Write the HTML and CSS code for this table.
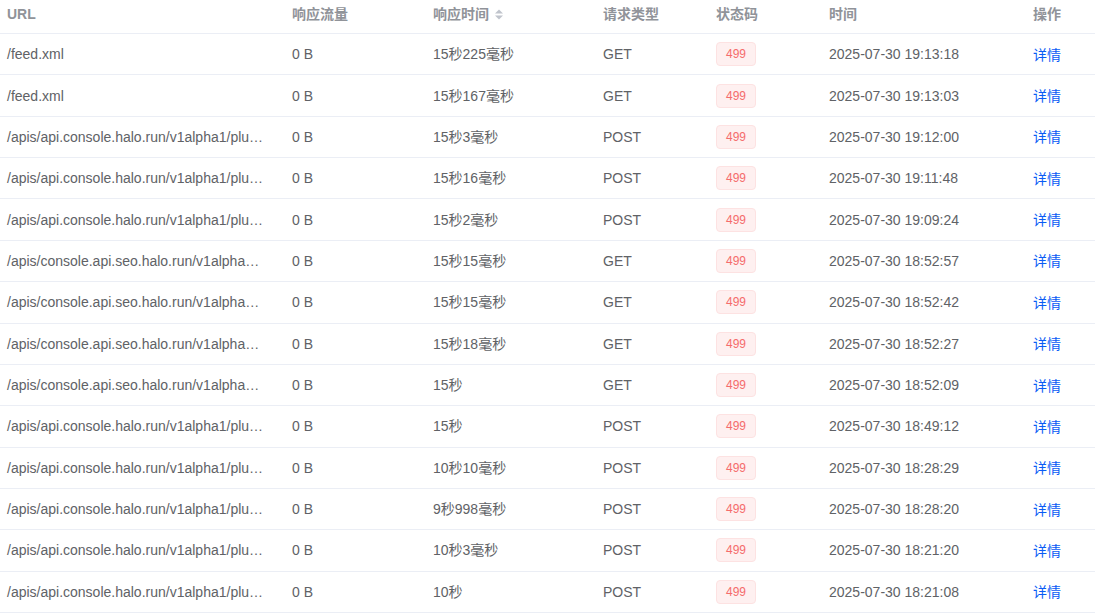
FILE: index.html
```html
<!DOCTYPE html>
<html lang="zh-CN">
<head>
<meta charset="utf-8">
<title>请求日志</title>
<link rel="stylesheet" href="styles.css">
</head>
<body>
<div class="table">
  <div class="row head">
    <div class="cell">URL</div>
    <div class="cell">响应流量</div>
    <div class="cell">响应时间<svg class="sort" viewBox="0 0 8 11" width="8" height="11"><path d="M0 4.5 L4 0.5 L8 4.5 Z M0 6.5 L4 10.5 L8 6.5 Z" fill="#c0c4cc"/></svg></div>
    <div class="cell">请求类型</div>
    <div class="cell">状态码</div>
    <div class="cell">时间</div>
    <div class="cell">操作</div>
  </div>

  <div class="row"><div class="cell url">/feed.xml</div><div class="cell">0 B</div><div class="cell">15秒225毫秒</div><div class="cell">GET</div><div class="cell"><span class="tag">499</span></div><div class="cell">2025-07-30 19:13:18</div><div class="cell"><a class="link" href="#">详情</a></div></div>
  <div class="row"><div class="cell url">/feed.xml</div><div class="cell">0 B</div><div class="cell">15秒167毫秒</div><div class="cell">GET</div><div class="cell"><span class="tag">499</span></div><div class="cell">2025-07-30 19:13:03</div><div class="cell"><a class="link" href="#">详情</a></div></div>
  <div class="row"><div class="cell url" title="/apis/api.console.halo.run/v1alpha1/plugins">/apis/api.console.halo.run/v1alpha1/plu…</div><div class="cell">0 B</div><div class="cell">15秒3毫秒</div><div class="cell">POST</div><div class="cell"><span class="tag">499</span></div><div class="cell">2025-07-30 19:12:00</div><div class="cell"><a class="link" href="#">详情</a></div></div>
  <div class="row"><div class="cell url" title="/apis/api.console.halo.run/v1alpha1/plugins">/apis/api.console.halo.run/v1alpha1/plu…</div><div class="cell">0 B</div><div class="cell">15秒16毫秒</div><div class="cell">POST</div><div class="cell"><span class="tag">499</span></div><div class="cell">2025-07-30 19:11:48</div><div class="cell"><a class="link" href="#">详情</a></div></div>
  <div class="row"><div class="cell url" title="/apis/api.console.halo.run/v1alpha1/plugins">/apis/api.console.halo.run/v1alpha1/plu…</div><div class="cell">0 B</div><div class="cell">15秒2毫秒</div><div class="cell">POST</div><div class="cell"><span class="tag">499</span></div><div class="cell">2025-07-30 19:09:24</div><div class="cell"><a class="link" href="#">详情</a></div></div>
  <div class="row"><div class="cell url" title="/apis/console.api.seo.halo.run/v1alpha1">/apis/console.api.seo.halo.run/v1alpha…</div><div class="cell">0 B</div><div class="cell">15秒15毫秒</div><div class="cell">GET</div><div class="cell"><span class="tag">499</span></div><div class="cell">2025-07-30 18:52:57</div><div class="cell"><a class="link" href="#">详情</a></div></div>
  <div class="row"><div class="cell url" title="/apis/console.api.seo.halo.run/v1alpha1">/apis/console.api.seo.halo.run/v1alpha…</div><div class="cell">0 B</div><div class="cell">15秒15毫秒</div><div class="cell">GET</div><div class="cell"><span class="tag">499</span></div><div class="cell">2025-07-30 18:52:42</div><div class="cell"><a class="link" href="#">详情</a></div></div>
  <div class="row"><div class="cell url" title="/apis/console.api.seo.halo.run/v1alpha1">/apis/console.api.seo.halo.run/v1alpha…</div><div class="cell">0 B</div><div class="cell">15秒18毫秒</div><div class="cell">GET</div><div class="cell"><span class="tag">499</span></div><div class="cell">2025-07-30 18:52:27</div><div class="cell"><a class="link" href="#">详情</a></div></div>
  <div class="row"><div class="cell url" title="/apis/console.api.seo.halo.run/v1alpha1">/apis/console.api.seo.halo.run/v1alpha…</div><div class="cell">0 B</div><div class="cell">15秒</div><div class="cell">GET</div><div class="cell"><span class="tag">499</span></div><div class="cell">2025-07-30 18:52:09</div><div class="cell"><a class="link" href="#">详情</a></div></div>
  <div class="row"><div class="cell url" title="/apis/api.console.halo.run/v1alpha1/plugins">/apis/api.console.halo.run/v1alpha1/plu…</div><div class="cell">0 B</div><div class="cell">15秒</div><div class="cell">POST</div><div class="cell"><span class="tag">499</span></div><div class="cell">2025-07-30 18:49:12</div><div class="cell"><a class="link" href="#">详情</a></div></div>
  <div class="row"><div class="cell url" title="/apis/api.console.halo.run/v1alpha1/plugins">/apis/api.console.halo.run/v1alpha1/plu…</div><div class="cell">0 B</div><div class="cell">10秒10毫秒</div><div class="cell">POST</div><div class="cell"><span class="tag">499</span></div><div class="cell">2025-07-30 18:28:29</div><div class="cell"><a class="link" href="#">详情</a></div></div>
  <div class="row"><div class="cell url" title="/apis/api.console.halo.run/v1alpha1/plugins">/apis/api.console.halo.run/v1alpha1/plu…</div><div class="cell">0 B</div><div class="cell">9秒998毫秒</div><div class="cell">POST</div><div class="cell"><span class="tag">499</span></div><div class="cell">2025-07-30 18:28:20</div><div class="cell"><a class="link" href="#">详情</a></div></div>
  <div class="row"><div class="cell url" title="/apis/api.console.halo.run/v1alpha1/plugins">/apis/api.console.halo.run/v1alpha1/plu…</div><div class="cell">0 B</div><div class="cell">10秒3毫秒</div><div class="cell">POST</div><div class="cell"><span class="tag">499</span></div><div class="cell">2025-07-30 18:21:20</div><div class="cell"><a class="link" href="#">详情</a></div></div>
  <div class="row"><div class="cell url" title="/apis/api.console.halo.run/v1alpha1/plugins">/apis/api.console.halo.run/v1alpha1/plu…</div><div class="cell">0 B</div><div class="cell">10秒</div><div class="cell">POST</div><div class="cell"><span class="tag">499</span></div><div class="cell">2025-07-30 18:21:08</div><div class="cell"><a class="link" href="#">详情</a></div></div>
</div>
</body>
</html>
```

FILE: styles.css
```css
* { box-sizing: border-box; }
html, body { margin: 0; padding: 0; background: #ffffff; }
body {
  font-family: "Liberation Sans", Arial, "Noto Sans CJK SC", sans-serif;
  font-size: 14px;
  color: #606266;
  overflow: hidden;
}
.table {
  width: 1095px;
  display: flex;
  flex-direction: column;
}
.row {
  display: grid;
  grid-template-columns: 292px 141px 170px 113px 113px 204px 62px;
  height: 41.36px;
  border-bottom: 1px solid #ebeef5;
  align-items: center;
}
.row.head {
  height: 34px;
  padding-bottom: 5px;
  color: #909399;
  font-weight: bold;
}
.cell {
  min-width: 0;
  white-space: nowrap;
  display: flex;
  align-items: center;
  line-height: 20px;
}
.cell:first-child { padding-left: 7px; }
.url {
  display: block;
  overflow: hidden;
  text-overflow: ellipsis;
  padding-right: 12px;
}
.sort {
  margin-left: 6px;
  margin-top: 1px;
}
.tag {
  display: inline-flex;
  align-items: center;
  justify-content: center;
  width: 40px;
  height: 24px;
  font-size: 12px;
  color: #f56c6c;
  background: #fef0f0;
  border: 1px solid #fde2e2;
  border-radius: 4px;
}
.link {
  color: #0a5cf5;
  text-decoration: none;
  margin-top: 1px;
}
```
